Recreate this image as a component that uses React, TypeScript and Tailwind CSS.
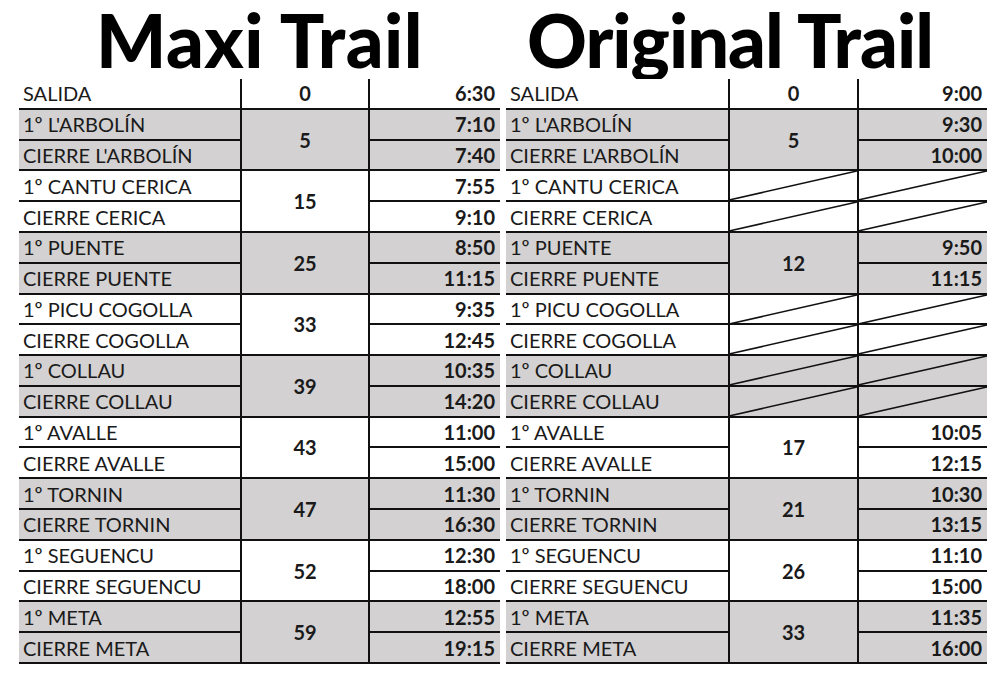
import React from "react";

type Group = {
  names: string[];
  km?: string;
  times?: string[];
  crossed?: boolean;
  gray?: boolean;
};

const maxi: Group[] = [
  { names: ["SALIDA"], km: "0", times: ["6:30"] },
  { names: ["1º L'ARBOLÍN", "CIERRE L'ARBOLÍN"], km: "5", times: ["7:10", "7:40"], gray: true },
  { names: ["1º CANTU CERICA", "CIERRE CERICA"], km: "15", times: ["7:55", "9:10"] },
  { names: ["1º PUENTE", "CIERRE PUENTE"], km: "25", times: ["8:50", "11:15"], gray: true },
  { names: ["1º PICU COGOLLA", "CIERRE COGOLLA"], km: "33", times: ["9:35", "12:45"] },
  { names: ["1º COLLAU", "CIERRE COLLAU"], km: "39", times: ["10:35", "14:20"], gray: true },
  { names: ["1º AVALLE", "CIERRE AVALLE"], km: "43", times: ["11:00", "15:00"] },
  { names: ["1º TORNIN", "CIERRE TORNIN"], km: "47", times: ["11:30", "16:30"], gray: true },
  { names: ["1º SEGUENCU", "CIERRE SEGUENCU"], km: "52", times: ["12:30", "18:00"] },
  { names: ["1º META", "CIERRE META"], km: "59", times: ["12:55", "19:15"], gray: true },
];

const original: Group[] = [
  { names: ["SALIDA"], km: "0", times: ["9:00"] },
  { names: ["1º L'ARBOLÍN", "CIERRE L'ARBOLÍN"], km: "5", times: ["9:30", "10:00"], gray: true },
  { names: ["1º CANTU CERICA", "CIERRE CERICA"], crossed: true },
  { names: ["1º PUENTE", "CIERRE PUENTE"], km: "12", times: ["9:50", "11:15"], gray: true },
  { names: ["1º PICU COGOLLA", "CIERRE COGOLLA"], crossed: true },
  { names: ["1º COLLAU", "CIERRE COLLAU"], crossed: true, gray: true },
  { names: ["1º AVALLE", "CIERRE AVALLE"], km: "17", times: ["10:05", "12:15"] },
  { names: ["1º TORNIN", "CIERRE TORNIN"], km: "21", times: ["10:30", "13:15"], gray: true },
  { names: ["1º SEGUENCU", "CIERRE SEGUENCU"], km: "26", times: ["11:10", "15:00"] },
  { names: ["1º META", "CIERRE META"], km: "33", times: ["11:35", "16:00"], gray: true },
];

// diagonal stroke for the empty cells
function Slash() {
  return (
    <svg className="absolute inset-0 h-full w-full" preserveAspectRatio="none" viewBox="0 0 100 100">
      <line x1="0" y1="100" x2="100" y2="0" stroke="#111" strokeWidth="1.6" vectorEffect="non-scaling-stroke" />
    </svg>
  );
}

function Table({ data, cols }: { data: Group[]; cols: string }) {
  const cells: React.ReactNode[] = [];
  data.forEach((g, gi) => {
    const bg = g.gray ? "bg-[#d3d1d2]" : "bg-white";
    const span = g.names.length === 2 ? "row-span-2" : "";
    g.names.forEach((n, i) => {
      cells.push(
        <div
          key={`n${gi}-${i}`}
          className={`col-start-1 flex items-center border-b-2 border-r-2 border-[#111] pl-[4px] ${bg}`}
        >
          {n}
        </div>
      );
      if (g.crossed) {
        cells.push(
          <div key={`k${gi}-${i}`} className={`relative col-start-2 border-b-2 border-r-2 border-[#111] ${bg}`}>
            <Slash />
          </div>
        );
        cells.push(
          <div key={`t${gi}-${i}`} className={`relative col-start-3 border-b-2 border-[#111] ${bg}`}>
            <Slash />
          </div>
        );
        return;
      }
      if (i === 0) {
        cells.push(
          <div
            key={`k${gi}`}
            className={`col-start-2 flex items-center justify-center border-b-2 border-r-2 border-[#111] font-bold ${span} ${bg}`}
          >
            {g.km}
          </div>
        );
      }
      cells.push(
        <div
          key={`t${gi}-${i}`}
          className={`col-start-3 flex items-center justify-end border-b-2 border-[#111] pr-[5px] font-bold ${bg}`}
        >
          {g.times![i]}
        </div>
      );
    });
  });
  return (
    <div
      className={`grid h-[585px] grid-flow-row-dense grid-rows-[repeat(19,minmax(0,1fr))] text-[20px] leading-none text-[#1a1a1a] ${cols}`}
    >
      {cells}
    </div>
  );
}

export default function App() {
  return (
    <div className="h-[691px] w-[1000px] bg-white font-['Lato','Liberation_Sans',sans-serif]">
      <div className="flex gap-[6px] pl-[19px]">
        <div className="flex w-[481px] flex-col">
          <h1 className="h-[79px] text-center text-[74px] font-black leading-[79px] tracking-[0.5px] text-black">
            Maxi Trail
          </h1>
          <Table data={maxi} cols="grid-cols-[223px_128px_130px]" />
        </div>
        <div className="flex w-[481px] flex-col">
          <h1 className="h-[79px] pr-[33px] text-center text-[74px] font-black leading-[79px] tracking-[-1px] text-black">
            Original Trail
          </h1>
          <Table data={original} cols="grid-cols-[224px_129px_128px]" />
        </div>
      </div>
    </div>
  );
}
